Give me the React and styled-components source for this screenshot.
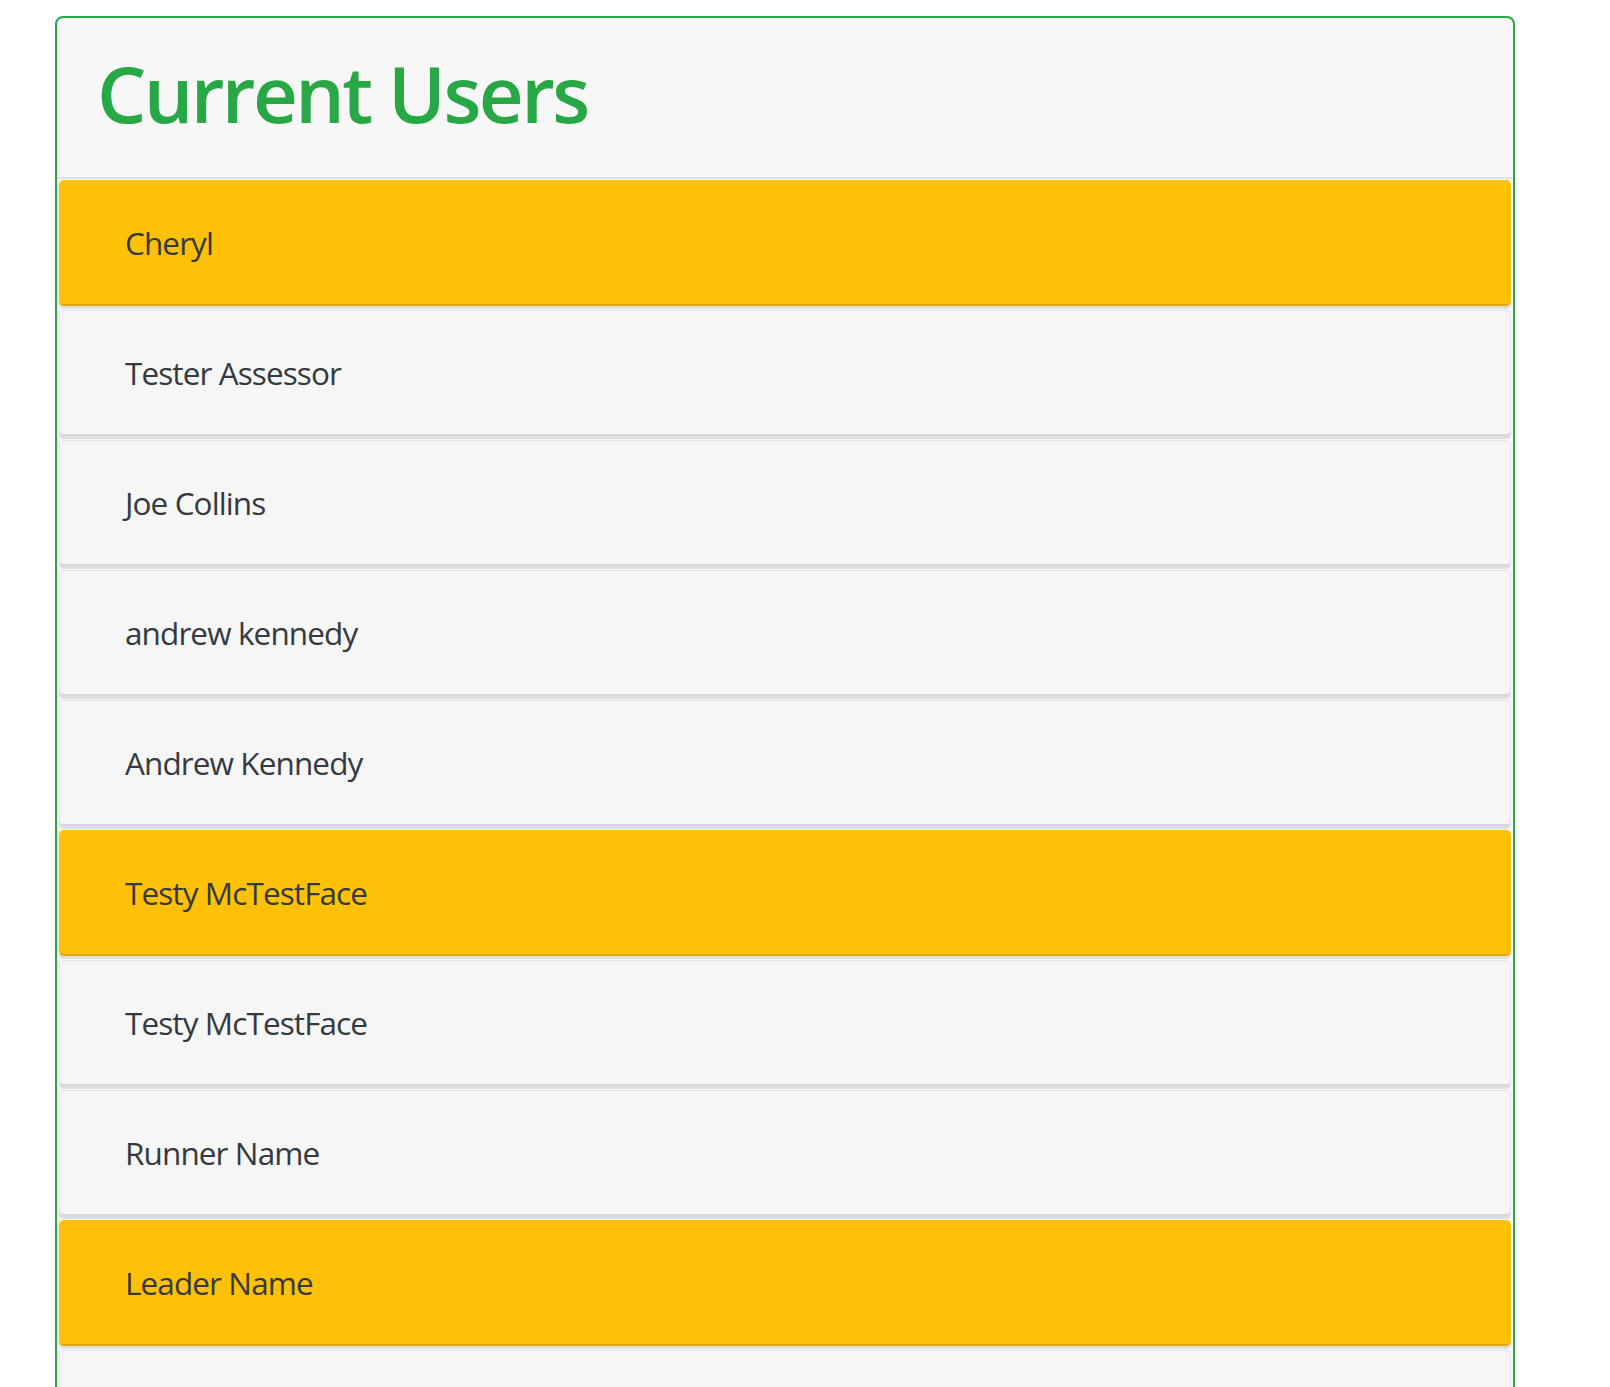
import React from "react";
import styled, { createGlobalStyle } from "styled-components";

const GlobalStyle = createGlobalStyle`
  body {
    margin: 0;
    background: #ffffff;
    font-family: "Open Sans", "Noto Sans", sans-serif;
    color: #343a40;
  }
`;

const Page = styled.div`
  padding: 16px 0 0 55px;
  height: 1387px;
  overflow: hidden;
  box-sizing: border-box;
`;

const Card = styled.div`
  width: 1460px;
  box-sizing: border-box;
  border: 2px solid #28a745;
  border-radius: 8px;
  background: #f7f7f7;
  overflow: hidden;
`;

const Header = styled.div`
  height: 161px;
  box-sizing: border-box;
  display: flex;
  align-items: center;
  padding: 0 0 10px 40px;
  border-bottom: 2px solid #e2e2e2;
`;

const Title = styled.h1`
  margin: 0;
  font-size: 78px;
  font-weight: 600;
  letter-spacing: -2.6px;
  color: #28a745;
  line-height: 1;
`;

const List = styled.div`
  display: flex;
  flex-direction: column;
  gap: 4px;
  padding: 1px 2px 0 2px;
`;

const Item = styled.div`
  height: 126px;
  box-sizing: border-box;
  display: flex;
  align-items: center;
  padding: 0 0 0 65px;
  border-radius: 5px;
  border: 1px solid ${(p) => (p.$active ? "#ffc107" : "#e4e4e4")};
  border-bottom: 2px solid ${(p) => (p.$active ? "#e0a800" : "#d8d8d8")};
  background: ${(p) => (p.$active ? "#ffc107" : "#f6f6f6")};
  box-shadow: 0 3px 0 #dedede;
  font-size: 31.5px;
  letter-spacing: -0.9px;
  color: #343a40;
`;

const users = [
  { name: "Cheryl", active: true },
  { name: "Tester Assessor" },
  { name: "Joe Collins" },
  { name: "andrew kennedy" },
  { name: "Andrew Kennedy" },
  { name: "Testy McTestFace", active: true },
  { name: "Testy McTestFace" },
  { name: "Runner Name" },
  { name: "Leader Name", active: true },
  { name: "" },
];

const App = () => (
  <>
    <GlobalStyle />
    <Page>
      <Card>
        <Header>
          <Title>Current Users</Title>
        </Header>
        <List>
          {users.map((u, i) => (
            <Item key={i} $active={u.active}>
              {u.name}
            </Item>
          ))}
        </List>
      </Card>
    </Page>
  </>
);

export default App;
